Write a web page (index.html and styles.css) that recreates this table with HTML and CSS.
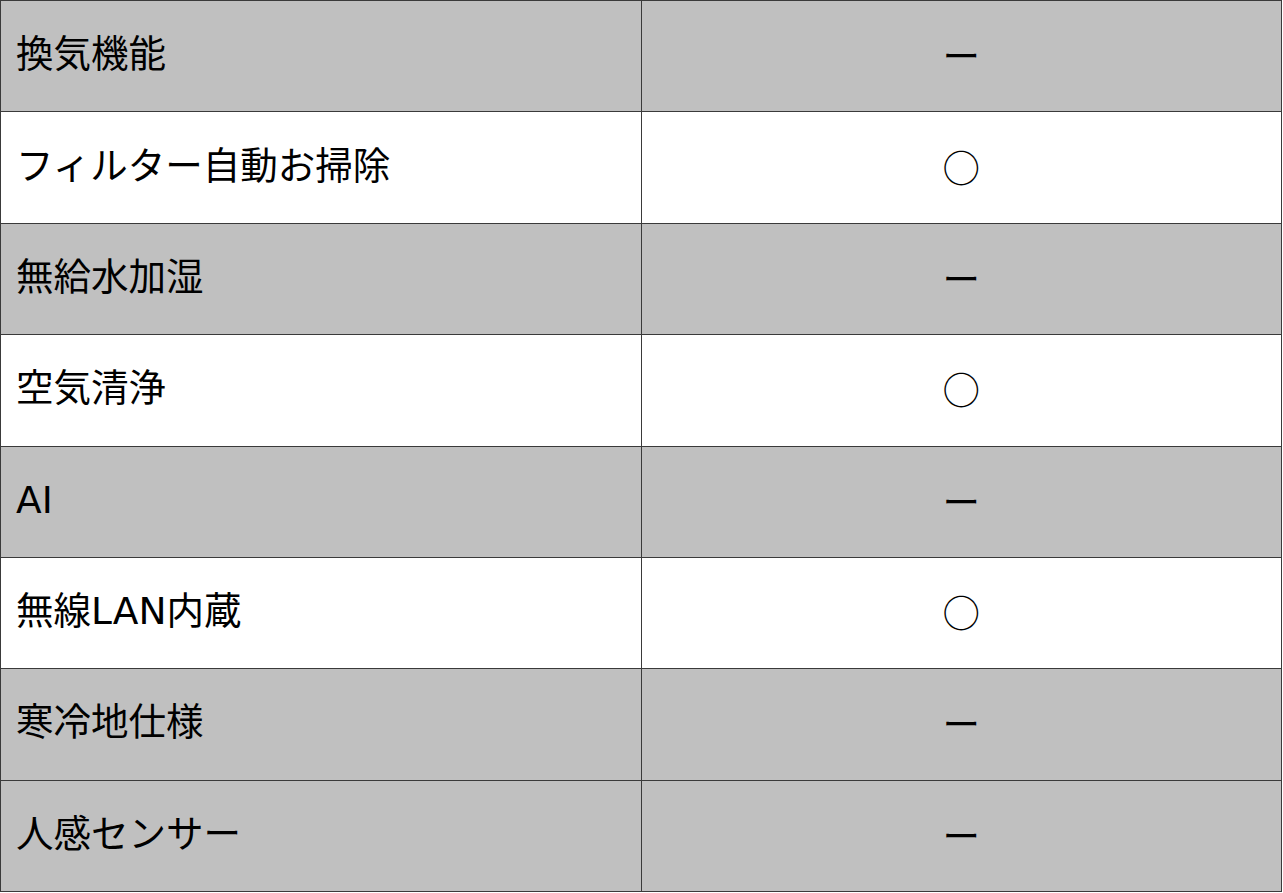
FILE: index.html
```html
<!DOCTYPE html>
<html lang="ja">
<head>
<meta charset="utf-8">
<link rel="stylesheet" href="styles.css">
</head>
<body>
<table class="spec">
  <tr class="gray"><td class="label">換気機能</td><td class="val">ー</td></tr>
  <tr class="white"><td class="label">フィルター自動お掃除</td><td class="val">○</td></tr>
  <tr class="gray"><td class="label">無給水加湿</td><td class="val">ー</td></tr>
  <tr class="white"><td class="label">空気清浄</td><td class="val">○</td></tr>
  <tr class="gray"><td class="label">AI</td><td class="val">ー</td></tr>
  <tr class="white"><td class="label">無線LAN内蔵</td><td class="val">○</td></tr>
  <tr class="gray"><td class="label">寒冷地仕様</td><td class="val">ー</td></tr>
  <tr class="gray"><td class="label">人感センサー</td><td class="val">ー</td></tr>
</table>
</body>
</html>
```

FILE: styles.css
```css
html, body {
  margin: 0;
  padding: 0;
  background: #ffffff;
}
.spec {
  border-collapse: collapse;
  width: 1282px;
  height: 892px;
  table-layout: fixed;
  font-family: "Noto Sans CJK JP", "Noto Sans", sans-serif;
  font-size: 37.5px;
  color: #000;
}
.spec td {
  border: 1px solid #3a3a3a;
  height: 106px;
  padding: 0 0 4px 15px;
  vertical-align: middle;
  line-height: 44px;
  white-space: nowrap;
}
.spec td.label {
  font-family: "DejaVu Sans", "Noto Sans CJK JP", sans-serif;
}
.spec td.val {
  text-align: center;
  padding: 0 0 4px 0;
}
.gray td {
  background: #c0c0c0;
}
.white td {
  background: #ffffff;
}
```
